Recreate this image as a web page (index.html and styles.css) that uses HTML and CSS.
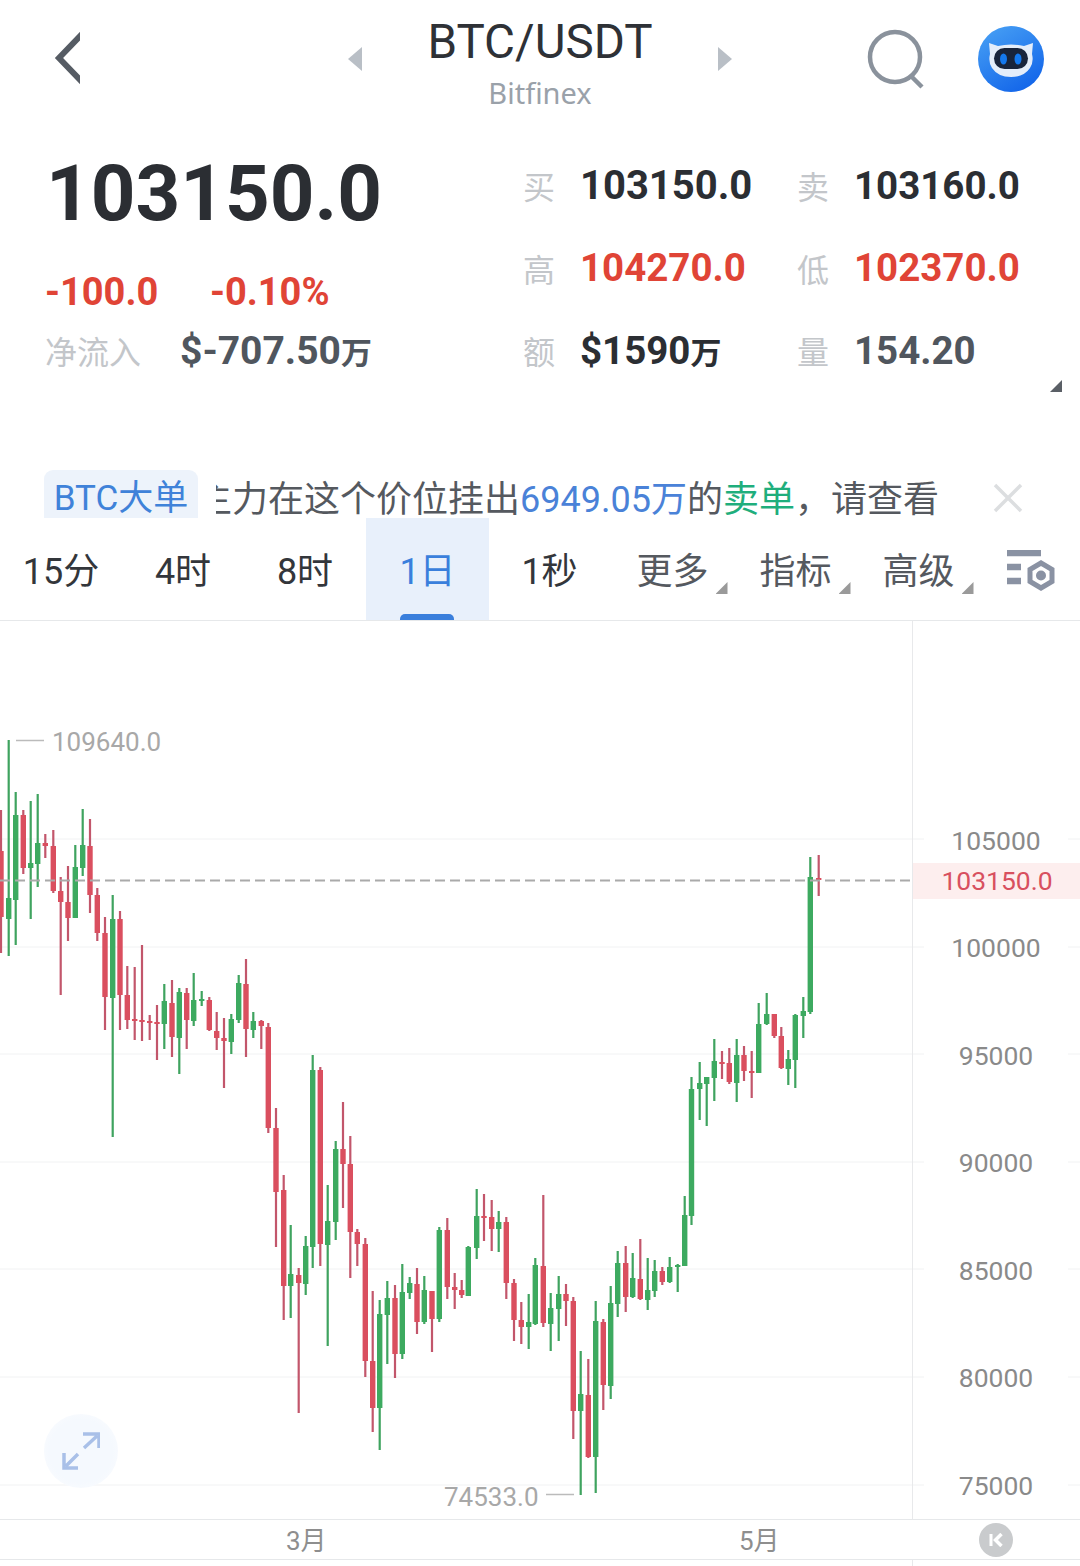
FILE: index.html
```html
<!DOCTYPE html>
<html lang="zh-CN">
<head>
    <meta charset="UTF-8">
    <meta name="viewport" content="width=device-width, initial-scale=1.0">
    <title>BTC/USDT</title>
    <link rel="stylesheet" href="styles.css">
</head>
<body>
    <header class="topbar">
        <svg class="back-icon" width="30" height="54" viewBox="0 0 30 54"><path d="M32 3 L9 27 L32 51" fill="none" stroke="#565c64" stroke-width="6"/></svg>
        <span class="arrow arrow-left"></span>
        <div class="pair">
            <div class="pair-name">BTC/USDT</div>
            <div class="pair-market">Bitfinex</div>
        </div>
        <span class="arrow arrow-right"></span>
        <svg class="search-icon" width="60" height="62" viewBox="0 0 60 62"><circle cx="28" cy="28" r="25" fill="none" stroke="#8a929c" stroke-width="4.5"/><path d="M44 47 L55 58" stroke="#8a929c" stroke-width="4.5"/></svg>
        <svg class="robot-icon" width="66" height="66" viewBox="0 0 66 66">
            <defs><linearGradient id="robotBg" x1="0" y1="0" x2="0.6" y2="1"><stop offset="0" stop-color="#4aa3f5"/><stop offset="1" stop-color="#1568ea"/></linearGradient></defs>
            <circle cx="33" cy="33" r="33" fill="url(#robotBg)"/>
            <path d="M11 17 L20 20 Q33 17 46 20 L55 17 L54 28 Q56 36 52 42 Q46 51 33 51 Q20 51 14 42 Q10 36 12 28 Z" fill="#e4edfa"/>
            <rect x="16" y="22" width="34" height="21" rx="10.5" fill="#18243c"/>
            <ellipse cx="25.5" cy="33" rx="3.5" ry="5.5" fill="#1478ee"/>
            <ellipse cx="40" cy="33" rx="3.5" ry="5.5" fill="#1478ee"/>
        </svg>
    </header>

    <section class="stats">
        <div class="stats-main">
            <div class="last-price">103150.0</div>
            <div class="change-row">
                <span class="up-down change-value">-100.0</span>
                <span class="up-down">-0.10%</span>
            </div>
            <div class="inflow-row">
                <span class="label inflow-label">净流入</span>
                <span class="inflow-value">$-707.50<small>万</small></span>
            </div>
        </div>
        <div class="stats-grid">
            <span class="label">买</span><span class="value value-lg dark">103150.0</span>
            <span class="label">卖</span><span class="value dark">103160.0</span>
            <span class="label">高</span><span class="value red">104270.0</span>
            <span class="label">低</span><span class="value red">102370.0</span>
            <span class="label">额</span><span class="value dark">$1590<small>万</small></span>
            <span class="label">量</span><span class="value grey">154.20</span>
        </div>
        <span class="corner corner-stats"></span>
    </section>

    <section class="ticker">
        <span class="ticker-badge">BTC大单</span>
        <div class="ticker-window">
            <div class="ticker-text">主力在这个价位挂出<span class="blue">6949.05万</span>的<span class="green">卖单</span>，请查看</div>
        </div>
        <svg class="close-icon" width="30" height="30" viewBox="0 0 30 30"><path d="M2 2 L28 28 M28 2 L2 28" stroke="#dcdee0" stroke-width="3.5"/></svg>
    </section>

    <nav class="tabs">
        <span class="tab">15分</span>
        <span class="tab">4时</span>
        <span class="tab">8时</span>
        <span class="tab active">1日</span>
        <span class="tab wide">1秒</span>
        <span class="tab wide muted"><span class="tab-label">更多<i class="corner"></i></span></span>
        <span class="tab wide muted"><span class="tab-label">指标<i class="corner"></i></span></span>
        <span class="tab wide muted"><span class="tab-label">高级<i class="corner"></i></span></span>
        <svg class="settings-icon" width="50" height="42" viewBox="0 0 50 42">
            <path d="M1 3 H35 M1 17 H15 M1 31 H15" stroke="#8a92a3" stroke-width="6.5"/>
            <path d="M35 13 L46 19.5 V31.5 L35 38 L24 31.5 V19.5 Z" fill="none" stroke="#8a92a3" stroke-width="5"/>
            <circle cx="35" cy="25.5" r="5" fill="#8a92a3"/>
        </svg>
    </nav>

    <main class="chart">
        <svg id="chartSvg" width="1080" height="898" viewBox="0 621 1080 898">
            <g class="grid">
                <path d="M0 839 H912 M0 947 H912 M0 1054 H912 M0 1162 H912 M0 1269 H912 M0 1377 H912 M0 1485 H912"/>
                <path d="M912 839 H924 M912 947 H924 M912 1054 H924 M912 1162 H924 M912 1269 H924 M912 1377 H924 M912 1485 H924"/>
                <path d="M1068 839 H1080 M1068 947 H1080 M1068 1054 H1080 M1068 1162 H1080 M1068 1269 H1080 M1068 1377 H1080 M1068 1485 H1080"/>
                <path class="axis-line" d="M912.5 621 V1519"/>
            </g>
            <g id="candles"></g>
            <path class="last-line" d="M0 880.5 H912"/>
            <rect class="price-tag" x="913" y="863" width="167" height="36"/>
            <text class="tag-text" x="997" y="890">103150.0</text>
            <text class="axis-text" x="996" y="850">105000</text>
            <text class="axis-text" x="996" y="957">100000</text>
            <text class="axis-text" x="996" y="1065">95000</text>
            <text class="axis-text" x="996" y="1172">90000</text>
            <text class="axis-text" x="996" y="1280">85000</text>
            <text class="axis-text" x="996" y="1387">80000</text>
            <text class="axis-text" x="996" y="1495">75000</text>
            <path class="extreme-line" d="M16 740.5 H44 M546 1494.5 H574"/>
            <text class="extreme-text" x="52" y="751">109640.0</text>
            <text class="extreme-text" x="444" y="1506">74533.0</text>
        </svg>
        <div class="expand-btn">
            <svg width="38" height="38" viewBox="0 0 38 38"><path d="M22 16 L35 4 M21 2 H37 V16 M16 22 L4 34 M2 21 V36 H16" fill="none" stroke="#a9c0e8" stroke-width="3.5"/></svg>
        </div>
    </main>

    <footer class="time-axis">
        <span class="month month-mar">3月</span>
        <span class="month month-may">5月</span>
        <span class="kline-btn">
            <svg width="14" height="14" viewBox="0 0 14 14"><path d="M2 1 V13" stroke="#fff" stroke-width="3"/><path d="M12.5 1 L6.5 7 L12.5 13" fill="none" stroke="#fff" stroke-width="3.5"/></svg>
        </span>
    </footer>
    <div class="bottom-strip"></div>

    <script src="chart.js"></script>
</body>
</html>
```

FILE: styles.css
```css
* {
    box-sizing: border-box;
}
html, body {
    margin: 0;
    padding: 0;
}
body {
    width: 1080px;
    height: 1566px;
    overflow: hidden;
    background: #fff;
    color: #2b2e33;
    font-family: Roboto, "Noto Sans CJK SC", sans-serif;
}

/* top bar */
.topbar {
    display: flex;
    align-items: flex-start;
    height: 120px;
    padding-top: 14px;
    padding-left: 50px;
}
.back-icon {
    margin-top: 17px;
}
.arrow {
    width: 14px;
    height: 24px;
    margin-top: 33px;
    background: #b9bfc6;
}
.arrow-left {
    margin-left: 268px;
    clip-path: polygon(100% 0, 100% 100%, 0 50%);
}
.arrow-right {
    clip-path: polygon(0 0, 100% 50%, 0 100%);
}
.pair {
    width: 356px;
    text-align: center;
}
.pair-name {
    font-size: 47.5px;
    line-height: 56px;
    color: #2e3136;
}
.pair-market {
    font-family: "Noto Sans", sans-serif;
    font-size: 29px;
    line-height: 46px;
    color: #9aa1a9;
}
.search-icon {
    margin-left: 135px;
    margin-top: 15px;
}
.robot-icon {
    margin-left: 51px;
    margin-top: 12px;
}

/* price block */
.stats {
    position: relative;
    display: flex;
    height: 350px;
}
.stats-main {
    width: 523px;
    padding-left: 45px;
}
.last-price {
    font-size: 78px;
    font-weight: 700;
    line-height: 94px;
    margin-top: 27px;
    margin-left: 1px;
    color: #2b2e33;
}
.change-row {
    display: flex;
    margin-top: 29px;
    line-height: 44px;
}
.up-down {
    font-size: 38px;
    font-weight: 700;
    color: #e04436;
}
.change-value {
    width: 165px;
}
.inflow-row {
    display: flex;
    align-items: center;
    margin-top: 14px;
    line-height: 46px;
}
.inflow-label {
    width: 135px;
    font-size: 33px;
}
.inflow-value {
    font-size: 39px;
    font-weight: 700;
    color: #50565e;
}
small {
    font-size: 31px;
    font-weight: 700;
}
.label {
    font-size: 32px;
    color: #c3c6ca;
}
.stats-grid {
    display: grid;
    grid-template-columns: 57px 217px 57px 1fr;
    grid-auto-rows: 82.5px;
    align-items: center;
    margin-top: 24px;
    height: 248px;
    flex: 1;
}
.value {
    font-size: 38.5px;
    font-weight: 700;
}
.value-lg {
    font-size: 40px;
}
.dark {
    color: #2b2e33;
}
.red {
    color: #e04436;
}
.grey {
    color: #50565e;
}
.corner {
    display: block;
    width: 12px;
    height: 12px;
    background: #9a9a9a;
    clip-path: polygon(100% 0, 100% 100%, 0 100%);
}
.corner-stats {
    position: absolute;
    right: 18px;
    top: 260px;
    background: #5a5f66;
}

/* ticker */
.ticker {
    display: flex;
    align-items: flex-start;
    height: 48px;
}
.ticker-badge {
    margin-left: 44px;
    width: 154px;
    height: 48px;
    border-radius: 9px 9px 0 0;
    background: #edf3fb;
    color: #3f82d9;
    font-size: 35px;
    line-height: 58px;
    text-align: center;
    white-space: nowrap;
}
.ticker-window {
    flex: 0 0 724px;
    height: 54px;
    margin-left: 18px;
    padding-top: 6px;
    overflow: hidden;
}
.ticker-text {
    margin-left: -20px;
    font-size: 36px;
    line-height: 48px;
    white-space: nowrap;
    color: #55595f;
}
.blue {
    color: #4a82d8;
}
.green {
    color: #1fae7c;
}
.close-icon {
    margin-left: 53px;
    margin-top: 13px;
}

/* period tabs */
.tabs {
    display: flex;
    align-items: stretch;
    height: 103px;
    border-bottom: 1px solid #e6e8ea;
}
.tab {
    position: relative;
    flex: 0 0 122px;
    font-size: 36px;
    line-height: 108px;
    text-align: center;
    color: #33363b;
}
.tab.wide {
    flex-basis: 123px;
}
.tab.muted {
    color: #55595f;
}
.tab.active {
    flex-basis: 123px;
    margin-right: -1px;
    background: #e8f0fb;
    color: #3a7fdc;
}
.tab.active::after {
    content: "";
    position: absolute;
    left: 34px;
    bottom: 0;
    width: 54px;
    height: 6px;
    border-radius: 5px 5px 0 0;
    background: #3a7fdc;
}
.tab-label {
    position: relative;
    display: inline-block;
}
.tab-label .corner {
    position: absolute;
    right: -19px;
    bottom: 32px;
}
.settings-icon {
    margin-left: 26px;
    margin-top: 32px;
}

/* chart */
.chart {
    position: relative;
    height: 898px;
}
#chartSvg {
    display: block;
}
.grid path {
    fill: none;
    stroke: #f1f2f3;
    stroke-width: 1;
}
.grid .axis-line {
    stroke: #e8e9eb;
}
.last-line {
    stroke: #aaa;
    stroke-width: 2;
    stroke-dasharray: 10 5;
}
.price-tag {
    fill: #fdeeee;
}
.tag-text {
    font-size: 26.5px;
    fill: #d8505f;
    text-anchor: middle;
}
.axis-text {
    font-size: 26.5px;
    fill: #8a8a8a;
    text-anchor: middle;
}
.extreme-line {
    stroke: #bbb;
    stroke-width: 1.5;
}
.extreme-text {
    font-size: 26px;
    fill: #a8a8a8;
}
.expand-btn {
    position: absolute;
    left: 44px;
    top: 793px;
    display: flex;
    align-items: center;
    justify-content: center;
    width: 74px;
    height: 74px;
    border-radius: 50%;
    background: radial-gradient(circle, #f5f9fe 60%, #fbfcfe 90%, #fff 100%);
}

/* time axis */
.time-axis {
    position: relative;
    height: 41px;
    border-top: 1px solid #e6e8ea;
    border-bottom: 1px solid #e6e8ea;
}
.month {
    position: absolute;
    top: 2px;
    font-size: 26px;
    line-height: 38px;
    color: #8e8e8e;
}
.month-mar {
    left: 286px;
}
.month-may {
    left: 739px;
}
.kline-btn {
    position: absolute;
    left: 979px;
    top: 3px;
    display: flex;
    align-items: center;
    justify-content: center;
    width: 34px;
    height: 34px;
    border-radius: 50%;
    background: #c9cbcd;
}
.bottom-strip {
    position: relative;
    height: 6px;
    margin-left: 912px;
    border-left: 1px solid #e8e9eb;
}
```

FILE: chart.js
```js
// candles in page pixels: [x, wickTop, bodyTop, bodyBottom, wickBottom, up]
const G = 1, R = 0;
const candles = [
    [1,810,851,917,953,R],[8.7,740,898,919,956,G],[15.7,792,815,900,945,G],[23.3,810,815,868,874,R],
    [30.7,801,863,868,919,G],[37.7,794,843,864,887,G],[45.3,834,843,846,858,R],[53.3,830,846,891,893,R],
    [60.7,877,891,902,995,R],[68,866,902,918,941,R],[75.3,845,867,918,918,G],[82.7,809,845,868,876,G],
    [90,819,846,895,913,R],[97.3,888,895,933,941,R],[105,917,933,997,1030,R],[112.7,895,919,998,1137,G],
    [120,911,919,995,1030,R],[127.3,966,995,1020,1029,R],[134.7,967,1019,1021,1040,R],[142,945,1020,1022,1041,R],
    [149.7,1015,1021,1023,1040,R],[157,1005,1022,1024,1060,R],[164.3,984,1001,1024,1049,G],[172,980,1003,1037,1057,R],
    [179.3,988,992,1038,1074,G],[186.7,988,993,1020,1049,R],[193.7,973,1000,1021,1026,G],[201.7,991,999,1001,1006,G],
    [209.3,997,1000,1030,1031,R],[216.7,1012,1031,1038,1050,R],[224,1018,1038,1041,1088,R],[231.3,1014,1019,1042,1054,G],
    [238.7,975,983,1020,1023,G],[246,959,984,1029,1057,R],[253.3,1012,1021,1030,1038,G],[261.3,1020,1021,1026,1049,R],
    [268.3,1023,1027,1128,1133,R],[276,1108,1128,1192,1247,R],[283.7,1175,1190,1286,1320,R],[290.7,1225,1274,1286,1318,G],
    [298.7,1268,1275,1283,1413,R],[305.7,1236,1246,1284,1295,G],[312.7,1055,1070,1247,1268,G],[320.3,1067,1070,1244,1266,R],
    [327.7,1185,1221,1245,1346,G],[335.7,1141,1149,1222,1240,G],[343,1102,1149,1164,1208,R],[350.3,1136,1164,1232,1278,R],
    [357.3,1229,1232,1244,1266,R],[365.3,1238,1244,1361,1377,R],[372.7,1291,1361,1408,1432,R],[379.7,1300,1314,1408,1450,G],
    [387.3,1281,1298,1315,1364,G],[395,1285,1298,1354,1378,R],[402.3,1264,1292,1354,1359,G],[409.7,1277,1283,1293,1299,G],
    [417,1268,1284,1322,1334,R],[424.3,1276,1290,1322,1324,G],[432,1291,1291,1319,1352,R],[439.3,1227,1230,1319,1322,G],
    [447.3,1218,1230,1287,1299,R],[454.7,1273,1287,1290,1309,R],[461.7,1280,1290,1295,1298,R],[468.3,1246,1247,1296,1296,G],
    [476.7,1189,1216,1248,1259,G],[484,1194,1216,1218,1241,R],[491.7,1200,1217,1229,1251,R],[498.7,1211,1222,1229,1252,G],
    [506.3,1217,1222,1283,1299,R],[514,1279,1283,1320,1341,R],[521.3,1302,1320,1327,1344,R],[528.7,1294,1322,1327,1349,G],
    [535.3,1258,1265,1324,1325,G],[543.3,1195,1266,1323,1327,R],[550.7,1293,1308,1324,1351,G],[558.7,1276,1294,1309,1341,G],
    [566,1284,1294,1301,1326,R],[573.3,1297,1301,1411,1439,R],[580.7,1351,1394,1411,1495,G],[588.3,1359,1395,1457,1458,R],
    [595.7,1301,1321,1457,1493,G],[603.3,1319,1322,1385,1410,R],[610.7,1286,1303,1386,1399,G],[617.7,1251,1263,1304,1317,G],
    [625.7,1246,1263,1297,1312,R],[632.7,1253,1278,1297,1298,G],[640.3,1239,1279,1299,1300,R],[647.7,1258,1290,1300,1310,G],
    [654.7,1260,1271,1291,1297,G],[662.3,1267,1271,1282,1285,R],[669.7,1257,1267,1282,1283,G],[677.7,1264,1265,1267,1292,G],
    [684.7,1196,1215,1266,1266,G],[691.5,1077,1089,1216,1225,G],[699.7,1062,1083,1089,1120,G],[706.7,1077,1077,1084,1126,G],
    [714.3,1039,1061,1078,1101,G],[722,1051,1062,1064,1079,R],[729.3,1048,1063,1082,1084,R],[736.7,1039,1055,1083,1102,G],
    [744,1046,1055,1071,1081,R],[751.7,1051,1071,1073,1098,R],[758.7,1003,1024,1073,1073,G],[766.7,993,1014,1024,1025,G],
    [774.3,1014,1014,1036,1038,R],[781.3,1027,1036,1068,1069,R],[788.3,1050,1059,1069,1085,G],[795.3,1014,1015,1060,1088,G],
    [803.3,997,1011,1016,1038,G],[810.3,857,877,1012,1014,G],[818.7,855,878,880,896,R]
];

const NS = 'http://www.w3.org/2000/svg';
const group = document.getElementById('candles');

function addRect(x, y, w, h, fill) {
    const rect = document.createElementNS(NS, 'rect');
    rect.setAttribute('x', x);
    rect.setAttribute('y', y);
    rect.setAttribute('width', w);
    rect.setAttribute('height', h);
    rect.setAttribute('fill', fill);
    group.appendChild(rect);
}

candles.forEach(([x, top, bodyTop, bodyBottom, bottom, up]) => {
    addRect(x - 1.1, top, 2.2, bottom - top, up ? '#3fa35f' : '#c2566b');
    addRect(x - 2.7, bodyTop, 5.4, Math.max(bodyBottom - bodyTop, 2), up ? '#3daa60' : '#da4f5f');
});
```
